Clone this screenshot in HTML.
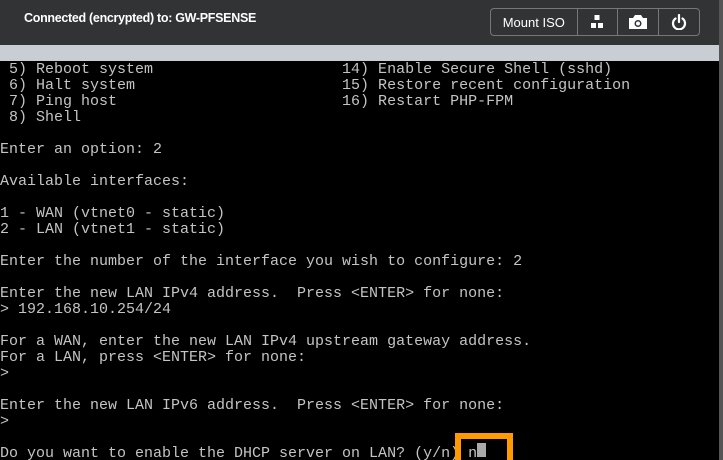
<!DOCTYPE html><html><head><style>
html,body{margin:0;width:723px;height:460px;overflow:hidden}
body{background:#000;position:relative;font-family:"Liberation Sans",sans-serif}
#hdr{position:absolute;left:0;top:0;width:723px;height:45px;background:#323335}
#band{position:absolute;left:0;top:45px;width:723px;height:16px;background:#c9cdd4}
#title{position:absolute;left:24px;top:11px;color:#fff;font-size:12.5px;font-weight:bold;letter-spacing:-0.3px}
#grp{position:absolute;left:490px;top:8px;width:208px;height:26px;border:1px solid #777;border-radius:4px;display:flex}
#grp div{border-left:1px solid #777;display:flex;align-items:center;justify-content:center;color:#fff}
#grp div:first-child{border-left:none}
pre{position:absolute;left:0;top:62px;margin:0;color:#c4c4c4;font-family:"Liberation Mono",monospace;font-size:15px;line-height:16px;letter-spacing:0}
#box{position:absolute;left:455px;top:433px;width:46px;height:30px;border:6px solid #ff9a00}
#cur{position:absolute;left:477px;top:443px;width:9px;height:14px;background:#aaa}
#rs{position:absolute;left:719px;top:0;width:4px;height:460px;background:#555}
</style></head><body>
<div id="hdr"></div><div id="band"></div>
<div id="title">Connected (encrypted) to: GW-PFSENSE</div>
<div id="grp">
<div style="width:86px;font-size:13px">Mount ISO</div>
<div style="width:40px"><svg width="12" height="14" viewBox="0 0 12 14"><rect x="3.5" y="0" width="5" height="5" fill="#fff"/><rect x="0" y="8" width="5" height="5" fill="#fff"/><rect x="7" y="8" width="5" height="5" fill="#fff"/></svg></div>
<div style="width:40px"><svg width="20" height="16" viewBox="0 0 20 16"><path d="M1 4h4l2-3h6l2 3h4v11H1z" fill="#fff"/><circle cx="10" cy="9.5" r="3.5" fill="#323335"/><circle cx="10" cy="9.5" r="2" fill="#fff"/></svg></div>
<div style="width:40px"><svg width="16" height="16" viewBox="0 0 16 16"><path d="M4.5 4.5a6 6 0 1 0 7 0" fill="none" stroke="#fff" stroke-width="2.2" stroke-linecap="round"/><path d="M8 1v7" stroke="#fff" stroke-width="2.2" stroke-linecap="round"/></svg></div>
</div>
<pre> 5) Reboot system                     14) Enable Secure Shell (sshd)
 6) Halt system                       15) Restore recent configuration
 7) Ping host                         16) Restart PHP-FPM
 8) Shell

Enter an option: 2

Available interfaces:

1 - WAN (vtnet0 - static)
2 - LAN (vtnet1 - static)

Enter the number of the interface you wish to configure: 2

Enter the new LAN IPv4 address.  Press &lt;ENTER&gt; for none:
&gt; 192.168.10.254/24

For a WAN, enter the new LAN IPv4 upstream gateway address.
For a LAN, press &lt;ENTER&gt; for none:
&gt;

Enter the new LAN IPv6 address.  Press &lt;ENTER&gt; for none:
&gt;

Do you want to enable the DHCP server on LAN? (y/n) n</pre>
<div id="cur"></div><div id="box"></div><div id="rs"></div>
</body></html>
